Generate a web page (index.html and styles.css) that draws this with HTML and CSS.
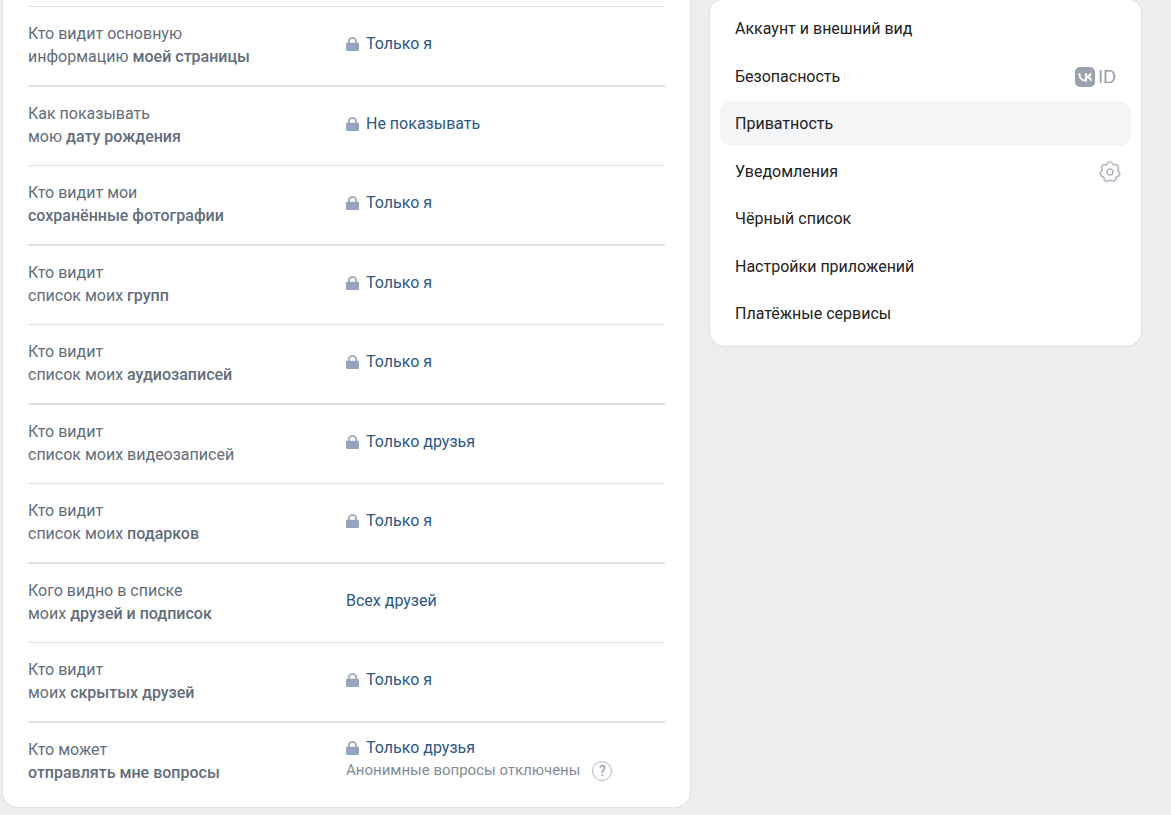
FILE: index.html
```html
<!DOCTYPE html>
<html lang="ru">
<head>
<meta charset="utf-8">
<meta name="viewport" content="width=device-width, initial-scale=1">
<title>Приватность</title>
<link rel="stylesheet" href="styles.css">
</head>
<body>
<svg class="sprite" aria-hidden="true">
  <symbol id="lock" viewBox="0 0 13 14">
    <path d="M2.8 7V4.6a3.7 3.6 0 0 1 7.4 0V7" fill="none" stroke="#a6b1c6" stroke-width="2.1"/>
    <rect y="5.8" width="13" height="8.2" rx="1.3" fill="#94a3be"/>
  </symbol>
</svg>
<div class="page">
  <main class="card settings">
    <div class="row">
      <div class="label">Кто видит основную<br>информацию <b>моей страницы</b></div>
      <div class="value"><button class="choice" type="button"><svg class="lock"><use href="#lock"/></svg>Только я</button></div>
    </div>
    <div class="row">
      <div class="label">Как показывать<br>мою <b>дату рождения</b></div>
      <div class="value"><button class="choice" type="button"><svg class="lock"><use href="#lock"/></svg>Не показывать</button></div>
    </div>
    <div class="row">
      <div class="label">Кто видит мои<br><b>сохранённые фотографии</b></div>
      <div class="value"><button class="choice" type="button"><svg class="lock"><use href="#lock"/></svg>Только я</button></div>
    </div>
    <div class="row">
      <div class="label">Кто видит<br>список моих <b>групп</b></div>
      <div class="value"><button class="choice" type="button"><svg class="lock"><use href="#lock"/></svg>Только я</button></div>
    </div>
    <div class="row">
      <div class="label">Кто видит<br>список моих <b>аудиозаписей</b></div>
      <div class="value"><button class="choice" type="button"><svg class="lock"><use href="#lock"/></svg>Только я</button></div>
    </div>
    <div class="row">
      <div class="label">Кто видит<br>список моих видеозаписей</div>
      <div class="value"><button class="choice" type="button"><svg class="lock"><use href="#lock"/></svg>Только друзья</button></div>
    </div>
    <div class="row">
      <div class="label">Кто видит<br>список моих <b>подарков</b></div>
      <div class="value"><button class="choice" type="button"><svg class="lock"><use href="#lock"/></svg>Только я</button></div>
    </div>
    <div class="row">
      <div class="label">Кого видно в списке<br>моих <b>друзей и подписок</b></div>
      <div class="value"><button class="choice" type="button">Всех друзей</button></div>
    </div>
    <div class="row">
      <div class="label">Кто видит<br>моих <b>скрытых друзей</b></div>
      <div class="value"><button class="choice" type="button"><svg class="lock"><use href="#lock"/></svg>Только я</button></div>
    </div>
    <div class="row">
      <div class="label">Кто может<br><b>отправлять мне вопросы</b></div>
      <div class="value value-double">
        <button class="choice" type="button"><svg class="lock"><use href="#lock"/></svg>Только друзья</button>
        <div class="note">Анонимные вопросы отключены <button class="help" type="button">?</button></div>
      </div>
    </div>
  </main>
  <nav class="card menu">
    <a class="item" href="#account">Аккаунт и внешний вид</a>
    <a class="item" href="#security">Безопасность
      <span class="vkid"><svg class="vk" viewBox="0 0 20 20" aria-label="VK"><rect width="20" height="20" rx="5" fill="#99a2ad"/><path d="M4.3 6.3c.2 4.500 2.300 7.200 6.200 7.200h.4V6.300M16 6.300c-.8 2-2.400 3.300-4.800 3.700 2.600.2 4.300 1.400 5.100 3.600" fill="none" stroke="#fff" stroke-width="2"/></svg>ID</span>
    </a>
    <a class="item active" href="#privacy" aria-current="page">Приватность</a>
    <a class="item" href="#notifications">Уведомления
      <svg class="gear" viewBox="0 0 22 22" fill="none" stroke="#b4bac2" stroke-width="1.7" stroke-linejoin="round" aria-hidden="true"><path d="M8.230 2.960A2.950 2.950 0 0 1 13.770 2.960A1.300 1.300 0 0 0 15.560 3.820A2.950 2.950 0 0 1 19.010 8.150A1.300 1.300 0 0 0 19.450 10.100A2.950 2.950 0 0 1 18.220 15.490A1.300 1.300 0 0 0 16.980 17.040A2.950 2.950 0 0 1 11.990 19.440A1.300 1.300 0 0 0 10.010 19.440A2.950 2.950 0 0 1 5.020 17.040A1.300 1.300 0 0 0 3.780 15.490A2.950 2.950 0 0 1 2.550 10.100A1.300 1.300 0 0 0 2.990 8.150A2.950 2.950 0 0 1 6.440 3.820A1.300 1.300 0 0 0 8.230 2.960Z"/><circle cx="11" cy="11" r="3"/></svg>
    </a>
    <a class="item" href="#blacklist">Чёрный список</a>
    <a class="item" href="#apps">Настройки приложений</a>
    <a class="item" href="#payments">Платёжные сервисы</a>
  </nav>
</div>
</body>
</html>
```
FILE: styles.css
```css
* {
  box-sizing: border-box;
}

body {
  margin: 0;
  background: #ebedef;
  font-family: Roboto, "Liberation Sans", sans-serif;
  font-size: 16px;
  line-height: 23px;
  color: #222;
}

button {
  padding: 0;
  border: 0;
  background: none;
  font: inherit;
  cursor: pointer;
}

.sprite {
  display: none;
}

.page {
  display: grid;
  grid-template-columns: minmax(0, 1fr) 431px;
  align-items: start;
  gap: 20px;
  padding: 0 30px 8px 3px;
}

.card {
  background: #fff;
  border-radius: 15px;
  box-shadow: 0 0 0 1px #dfe1e5;
}

.settings {
  padding: 6px 25px;
  border-top-left-radius: 0;
  border-top-right-radius: 0;
}

.row {
  display: grid;
  grid-template-columns: 318px 1fr;
  border-top: 2px solid #dce1e4;
}

.row:nth-child(odd) {
  border-top-width: 1px;
}

.label {
  padding: 15px 0 17px;
  color: #626d7a;
}

.label b {
  font-weight: 500;
}

.value {
  padding-top: 25px;
}

.value-double {
  padding-top: 13px;
}

.choice {
  display: flex;
  align-items: center;
  gap: 7px;
  color: #2a5885;
}

.lock {
  width: 13px;
  height: 14px;
}

.note {
  display: flex;
  align-items: center;
  gap: 12px;
  font-size: 15px;
  color: #818c99;
}

.help {
  width: 20px;
  height: 20px;
  border: 1px solid #b4bac2;
  border-radius: 50%;
  font-size: 14px;
  font-weight: 500;
  line-height: 18px;
  color: #99a2ad;
}

.menu {
  padding: 6px 10px 10px;
  border-top-left-radius: 12px;
  border-top-right-radius: 12px;
}

.item {
  display: flex;
  align-items: center;
  justify-content: space-between;
  height: 45px;
  margin-bottom: 2px;
  padding: 0 10px 0 15px;
  border-radius: 10px;
  color: #222;
  text-decoration: none;
}

.item:nth-child(odd) {
  margin-bottom: 3px;
}

.item:last-child {
  margin-bottom: 0;
}

.item.active {
  background: #f4f5f7;
}

.vkid {
  display: flex;
  align-items: center;
  gap: 3px;
  padding-right: 5px;
  font-family: Lato, "Liberation Sans", sans-serif;
  font-size: 17px;
  color: #99a2ad;
}

.vk {
  width: 20px;
  height: 20px;
}

.gear {
  width: 22px;
  height: 22px;
}
```
